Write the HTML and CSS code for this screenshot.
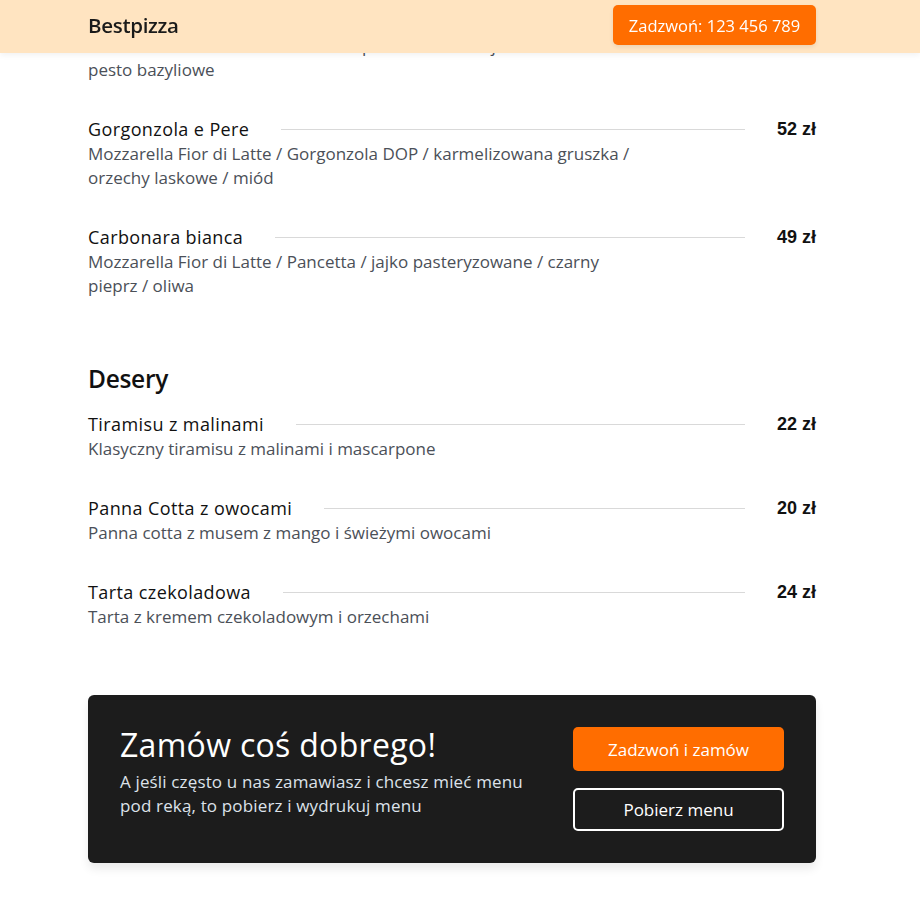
FILE: index.html
```html
<!DOCTYPE html>
<html lang="pl">
<head>
<meta charset="utf-8">
<title>Bestpizza – menu</title>
<link rel="stylesheet" href="styles.css">
</head>
<body>
<header class="topbar">
  <div class="container topbar-inner">
    <div class="logo">Bestpizza</div>
    <a class="btn btn-orange btn-call" href="#">Zadzwoń: 123 456 789</a>
  </div>
</header>

<main class="container menu">
  <section class="category">
    <div class="item">
      <div class="item-head">
        <span class="item-name">Pesto e Burrata</span>
        <span class="item-line"></span>
        <span class="item-price">51 zł</span>
      </div>
      <p class="item-desc">Mozzarella Fior di Latte / Burrata / pomidorki koktajlowe / rukola / pesto bazyliowe</p>
    </div>
    <div class="item">
      <div class="item-head">
        <span class="item-name">Gorgonzola e Pere</span>
        <span class="item-line"></span>
        <span class="item-price">52 zł</span>
      </div>
      <p class="item-desc">Mozzarella Fior di Latte / Gorgonzola DOP / karmelizowana gruszka / orzechy laskowe / miód</p>
    </div>
    <div class="item">
      <div class="item-head">
        <span class="item-name">Carbonara bianca</span>
        <span class="item-line"></span>
        <span class="item-price">49 zł</span>
      </div>
      <p class="item-desc">Mozzarella Fior di Latte / Pancetta / jajko pasteryzowane / czarny pieprz / oliwa</p>
    </div>
  </section>

  <section class="category">
    <h2 class="category-title">Desery</h2>
    <div class="item">
      <div class="item-head">
        <span class="item-name">Tiramisu z malinami</span>
        <span class="item-line"></span>
        <span class="item-price">22 zł</span>
      </div>
      <p class="item-desc">Klasyczny tiramisu z malinami i mascarpone</p>
    </div>
    <div class="item">
      <div class="item-head">
        <span class="item-name">Panna Cotta z owocami</span>
        <span class="item-line"></span>
        <span class="item-price">20 zł</span>
      </div>
      <p class="item-desc">Panna cotta z musem z mango i świeżymi owocami</p>
    </div>
    <div class="item">
      <div class="item-head">
        <span class="item-name">Tarta czekoladowa</span>
        <span class="item-line"></span>
        <span class="item-price">24 zł</span>
      </div>
      <p class="item-desc">Tarta z kremem czekoladowym i orzechami</p>
    </div>
  </section>

  <section class="cta">
    <div class="cta-text">
      <h2 class="cta-title">Zamów coś dobrego!</h2>
      <p class="cta-lead">A jeśli często u nas zamawiasz i chcesz mieć menu pod reką, to pobierz i wydrukuj menu</p>
    </div>
    <div class="cta-actions">
      <a class="btn btn-orange btn-wide" href="#">Zadzwoń i zamów</a>
      <a class="btn btn-outline btn-wide" href="#">Pobierz menu</a>
    </div>
  </section>
</main>
</body>
</html>
```
FILE: styles.css
```css
* { box-sizing: border-box; }

html, body {
  margin: 0;
  padding: 0;
  background: #ffffff;
}

body {
  font-family: "Open Sans", "DejaVu Sans", sans-serif;
  color: #111111;
  padding-right: 16px;
}

.container {
  width: 728px;
  margin: 0 auto;
}

.topbar {
  position: fixed;
  top: 0;
  left: 0;
  right: 0;
  height: 53px;
  padding-right: 16px;
  background: #ffe4c1;
  box-shadow: 0 2px 6px rgba(0, 0, 0, 0.06);
  z-index: 10;
}

.topbar-inner {
  height: 100%;
  padding-bottom: 3px;
  display: flex;
  align-items: center;
  justify-content: space-between;
}

.logo {
  font-size: 20.5px;
  font-weight: 600;
  color: #1a1a1a;
  letter-spacing: -0.3px;
}

.btn {
  display: flex;
  align-items: center;
  justify-content: center;
  text-decoration: none;
  border-radius: 5px;
  font-size: 17px;
  font-weight: 500;
}

.btn-orange {
  background: #ff6d00;
  color: #ffffff;
}

.btn-call {
  width: 203px;
  height: 40px;
  font-size: 16.5px;
  font-weight: 400;
  box-shadow: 0 2px 4px rgba(0, 0, 0, 0.08);
}

.menu {
  padding-top: 8px;
  display: flex;
  flex-direction: column;
}

.category + .category {
  margin-top: 29px;
}

.category-title {
  margin: 0 0 14px;
  font-size: 24.5px;
  line-height: 36px;
  font-weight: 600;
  letter-spacing: -0.3px;
}

.item {
  margin-bottom: 34px;
}

.item-head {
  display: flex;
  align-items: center;
  height: 26px;
}

.item-name {
  font-size: 18px;
  letter-spacing: 0.4px;
  color: #111111;
  white-space: nowrap;
}

.item-line {
  flex: 1;
  height: 1px;
  background: #d9d9d9;
  margin: 0 32px;
}

.item-price {
  font-family: "Liberation Sans", Arial, sans-serif;
  font-weight: 700;
  font-size: 18px;
  color: #111111;
}

.item-desc {
  margin: 0;
  max-width: 560px;
  font-size: 17px;
  line-height: 24px;
  color: #4b5058;
}

.cta {
  margin-top: 32px;
  margin-bottom: 40px;
  background: #1c1c1c;
  border-radius: 6px;
  padding: 32px;
  display: flex;
  justify-content: space-between;
  align-items: flex-start;
  box-shadow: 0 6px 10px rgba(0, 0, 0, 0.08);
}

.cta-title {
  margin: 0 0 7px;
  font-size: 32px;
  letter-spacing: 0.3px;
  line-height: 36px;
  font-weight: 400;
  color: #ffffff;
}

.cta-lead {
  margin: 0;
  max-width: 420px;
  font-size: 17px;
  letter-spacing: 0.15px;
  line-height: 24px;
  color: #dde2ea;
}

.cta-actions {
  display: flex;
  flex-direction: column;
  gap: 17px;
}

.btn-wide {
  width: 211px;
  height: 44px;
}

.btn-outline {
  border: 2px solid #ffffff;
  color: #ffffff;
  height: 43px;
}
```
